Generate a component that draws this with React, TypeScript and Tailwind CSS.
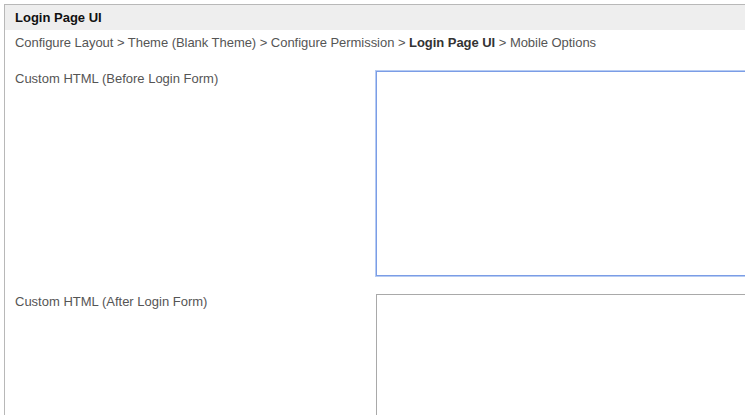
import React from "react";

export default function App() {
  return (
    <div className="w-[745px] h-[415px] overflow-hidden bg-white" style={{ fontFamily: '"Liberation Sans", Arial, sans-serif' }}>
      <div className="ml-[4px] mt-[4px] w-[800px] h-[420px] border-l border-t border-[#b8b8b8]">
        <div className="h-[25px] bg-[#eeeeee] pl-[10px] flex items-center text-[13px] font-bold text-[#111]">
          Login Page UI
        </div>
        <div className="pl-[10px] h-[25px] flex items-center text-[13px] text-[#555] tracking-[-0.04px]">
          <span>Configure Layout &gt; Theme (Blank Theme) &gt; Configure Permission &gt;&nbsp;</span>
          <span className="font-bold text-[#333]">Login Page UI</span>
          <span>&nbsp;&gt; Mobile Options</span>
        </div>
        <div className="pl-[10px] mt-[16px] flex flex-col gap-[18px]">
          <div className="flex">
            <div className="w-[361px] text-[13px] leading-[15px] text-[#555]">Custom HTML (Before Login Form)</div>
            <textarea className="w-[400px] h-[205px] border border-[#7b9de6] shadow-[0_0_0_1px_#b6cbf2] outline-none resize-none" />
          </div>
          <div className="flex">
            <div className="w-[361px] text-[13px] leading-[15px] text-[#555]">Custom HTML (After Login Form)</div>
            <textarea className="w-[400px] h-[205px] border border-[#a9a9a9] outline-none resize-none" />
          </div>
        </div>
      </div>
    </div>
  );
}
